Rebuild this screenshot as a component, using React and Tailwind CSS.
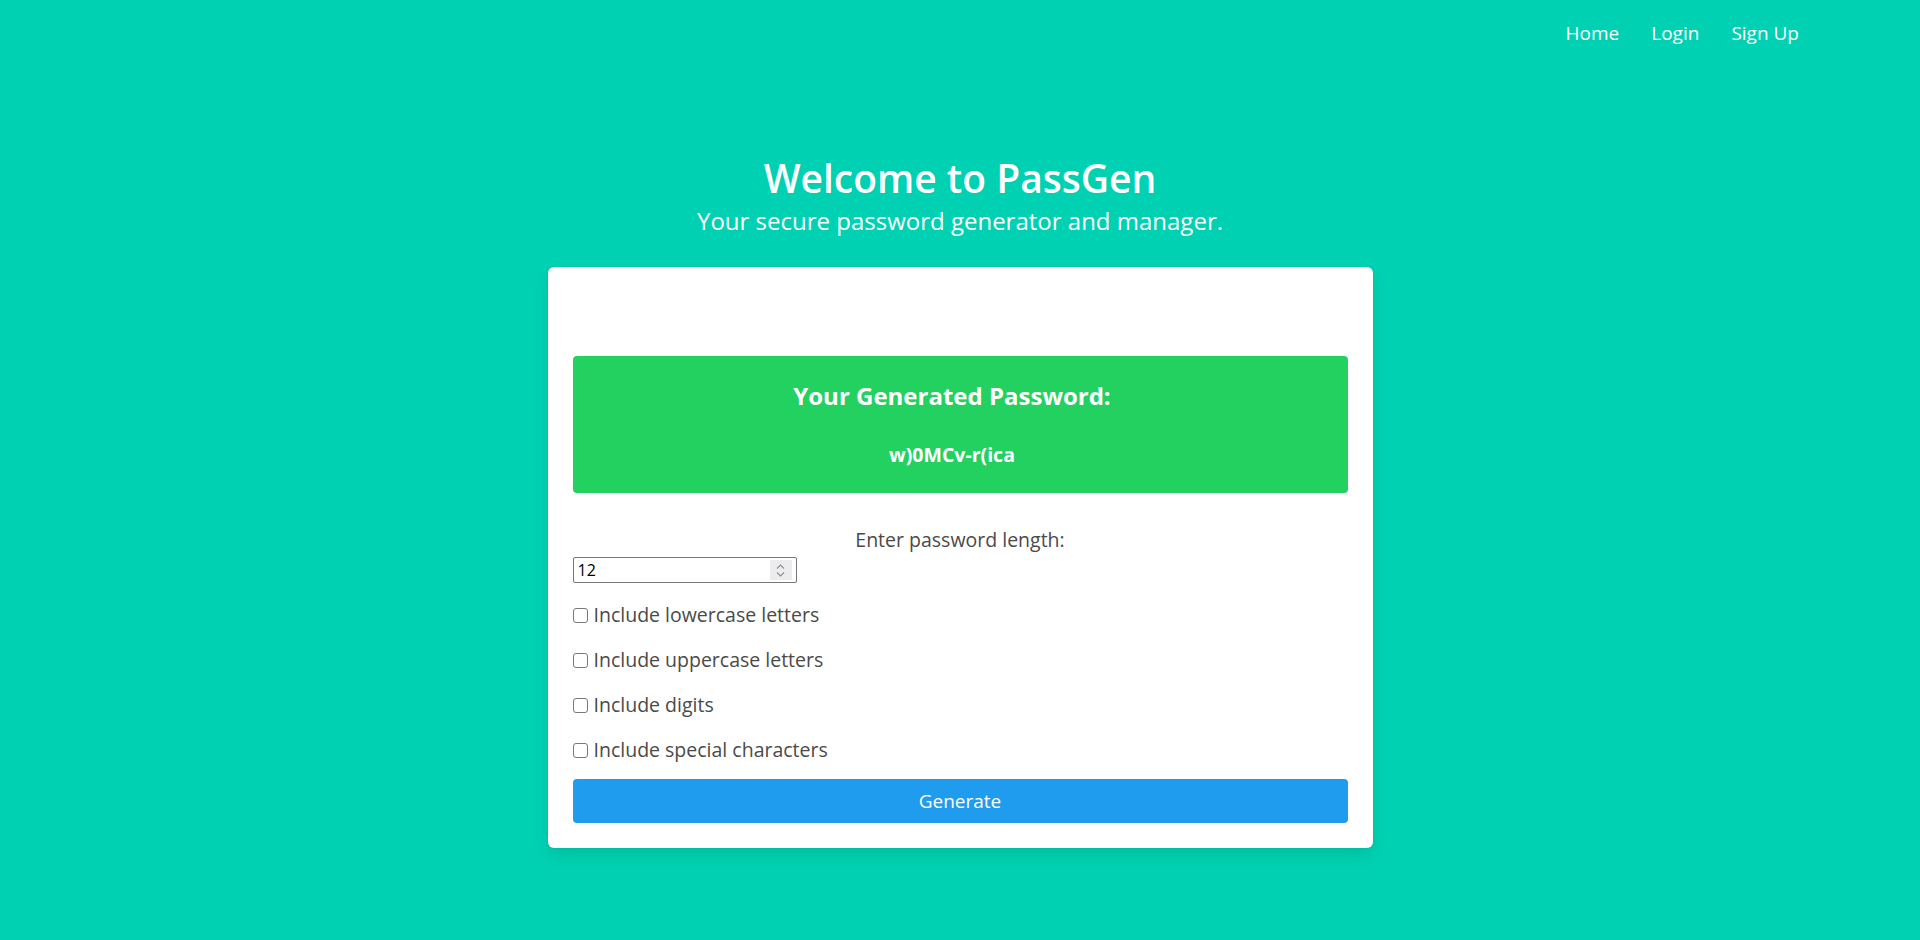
import React from "react";

function Spinner() {
  return (
    <div className="flex h-[20px] w-[22px] flex-col items-center justify-center gap-[3px] bg-[#ececef]">
      <svg width="9" height="5" viewBox="0 0 9 5">
        <path d="M1 4.5 L4.5 1 L8 4.5" fill="none" stroke="#8f8f8f" strokeWidth="1.1" />
      </svg>
      <svg width="9" height="5" viewBox="0 0 9 5">
        <path d="M1 0.5 L4.5 4 L8 0.5" fill="none" stroke="#8f8f8f" strokeWidth="1.1" />
      </svg>
    </div>
  );
}

function CheckRow({ label }) {
  return (
    <label className="flex h-[24px] items-center">
      <span className="h-[15px] w-[15px] shrink-0 rounded-[3px] border-[1.5px] border-[#7a7a7a] bg-white" />
      <span className="ml-[6px] text-[19.5px] leading-[24px] text-[#4a4a4a]">{label}</span>
    </label>
  );
}

export default function App() {
  return (
    <div
      className="min-h-[940px] bg-[#00d1b2]"
      style={{ fontFamily: '"Open Sans", "Noto Sans", sans-serif' }}
    >
      <nav className="flex h-[66px] items-center justify-end gap-8 pr-[121px] text-[19px] text-white">
        <a>Home</a>
        <a>Login</a>
        <a>Sign Up</a>
      </nav>

      <header className="mt-[88px] flex flex-col items-center text-white">
        <h1 className="text-[39px] font-semibold leading-[48px]">Welcome to PassGen</h1>
        <p className="mt-[4px] text-[24px] leading-[30px]">Your secure password generator and manager.</p>
      </header>

      <main className="mx-auto mt-[31px] w-[825px] rounded-[6px] bg-white p-[25px] pt-[89px] shadow-[0_8px_16px_-2px_rgba(10,10,10,0.1),0_0_0_1px_rgba(10,10,10,0.02)]">
        <section className="flex h-[137px] flex-col items-center rounded-[4px] bg-[#23d160] pl-[24px] pr-[40px] pt-[25px] text-white">
          <h2 className="text-[24px] font-bold leading-[30px]">Your Generated Password:</h2>
          <p className="mt-[30px] text-[19.5px] font-bold leading-[28px]">w)0MCv-r(ica</p>
        </section>

        <p className="mt-[35px] text-center text-[19.5px] leading-[24px] text-[#4a4a4a]">Enter password length:</p>

        <div className="mt-[5px] flex h-[26px] w-[224px] items-center rounded-[2px] border border-[#767676] bg-white pl-[4px] pr-[4px]">
          <input
            type="text"
            defaultValue="12"
            className="min-w-0 flex-1 bg-transparent text-[16px] text-black outline-none"
          />
          <Spinner />
        </div>

        <div className="mt-[20px] flex flex-col gap-[21px]">
          <CheckRow label="Include lowercase letters" />
          <CheckRow label="Include uppercase letters" />
          <CheckRow label="Include digits" />
          <CheckRow label="Include special characters" />
        </div>

        <button className="mt-[17px] flex h-[44px] w-full items-center justify-center rounded-[4px] bg-[#209cee] text-[19px] text-white">
          Generate
        </button>
      </main>
    </div>
  );
}
